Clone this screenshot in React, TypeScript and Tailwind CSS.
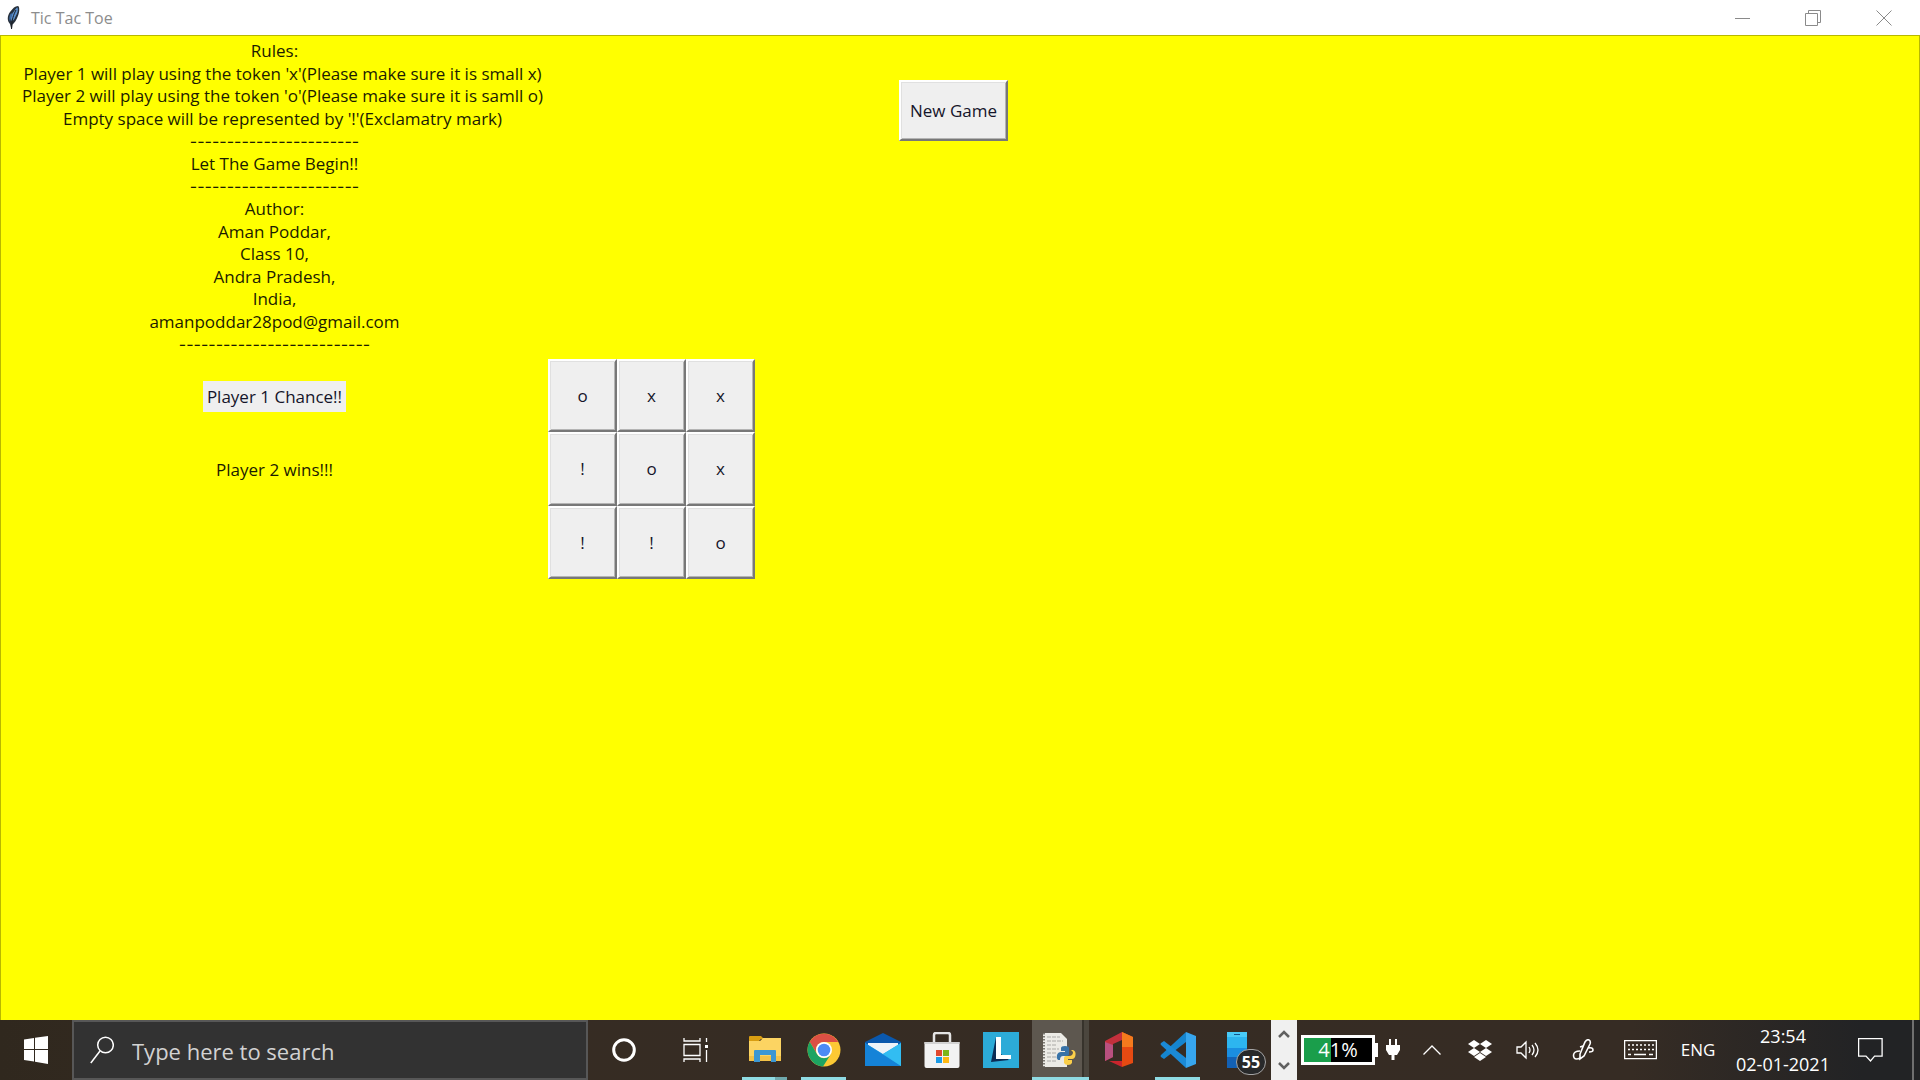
import React, { ReactNode } from "react";

const rules: { text: string; kind?: "wide" | "dashes" }[] = [
  { text: "Rules:" },
  { text: "Player 1 will play using the token 'x'(Please make sure it is small x)", kind: "wide" },
  { text: "Player 2 will play using the token 'o'(Please make sure it is samll o)", kind: "wide" },
  { text: "Empty space will be represented by '!'(Exclamatry mark)", kind: "wide" },
  { text: "-----------------------", kind: "dashes" },
  { text: "Let The Game Begin!!" },
  { text: "-----------------------", kind: "dashes" },
  { text: "Author:" },
  { text: "Aman Poddar," },
  { text: "Class 10," },
  { text: "Andra Pradesh," },
  { text: "India," },
  { text: "amanpoddar28pod@gmail.com" },
  { text: "--------------------------", kind: "dashes" },
];

const lineStyle = {
  plain: "text-[17px] leading-[22px]",
  wide: "pl-4 text-[17px] leading-[22px]",
  dashes: "font-['Inter',sans-serif] text-base leading-[22px]",
};

const board = ["o", "x", "x", "!", "o", "x", "!", "!", "o"];

const raised =
  "border-2 border-t-white border-l-white border-r-[#787878] border-b-[#787878] bg-[#efefef] text-center shadow-[inset_1px_1px_0_#e0e0e0,inset_-1px_-1px_0_#b4b4b4]";

function TitleBar() {
  return (
    <header className="flex h-[35px] shrink-0 items-center bg-white">
      <svg className="ml-1.5 h-6 w-4" viewBox="0 0 16 24">
        <path d="M12 0c2 1 1.500 7-.5 11-2 5-3.500 6-5 7.500L6 23l-1-1-1-4C1 15 1 10 4 6 7 2 9 0 12 0z" fill="#27303c" />
        <path d="M11.500 1.500c1 2 0 6-2 9-1 3-2.500 4-3.500 5-2-3-.5-7.500 1.500-9.500 2-3 3-4.500 4-4.500z" fill="#5d92cf" />
        <path d="M4.500 8c-1.500 3-1.500 5-.5 7.500L6.500 7z" fill="#3f6ea8" />
        <path d="M10 4C7.500 9 5.800 13 5.500 23" fill="none" stroke="#1a1d22" strokeWidth="1" />
      </svg>
      <h1 className="ml-[9px] grow text-base text-[#8d8d8d]">Tic Tac Toe</h1>
      <div className="flex">
        <button aria-label="Minimize" className="flex h-[34px] w-[70px] items-center justify-center">
          <svg className="size-4" viewBox="0 0 16 16"><path d="M0 8.500h15" stroke="#8a8a8a" fill="none" /></svg>
        </button>
        <button aria-label="Restore" className="flex h-[34px] w-[70px] items-center justify-center">
          <svg className="size-4" viewBox="0 0 16 16"><path d="M.5 3.500h12v12H.5zM3.500 3.500v-3h12v12h-3" stroke="#8a8a8a" fill="none" /></svg>
        </button>
        <button aria-label="Close" className="flex h-[34px] w-[72px] items-center justify-center">
          <svg className="size-4" viewBox="0 0 16 16"><path d="M.5.5l15 15M15.500.5l-15 15" stroke="#8a8a8a" fill="none" /></svg>
        </button>
      </div>
    </header>
  );
}

function Game() {
  return (
    <main className="flex grow items-start border-t border-r border-l border-[#b8b800] bg-[#ffff00] text-[17px] text-[#1c1c00]">
      <section className="flex w-[547px] shrink-0 flex-col items-center">
        <div className="mt-1 grid h-[316px] w-full grid-rows-[repeat(14,1fr)] text-center whitespace-nowrap">
          {rules.map((line, i) => (
            <p key={i} className={lineStyle[line.kind ?? "plain"]}>{line.text}</p>
          ))}
        </div>
        <div className="mt-1 flex h-[73px] items-center">
          <p className="bg-[#efefef] px-1 py-1 leading-[23px] text-[#15152a]">Player 1 Chance!!</p>
        </div>
        <div className="flex h-[73px] items-center">
          <p>Player 2 wins!!!</p>
        </div>
      </section>
      <section aria-label="Board" className="mt-[323px] grid h-[220px] shrink-0 grid-cols-[repeat(3,69px)] grid-rows-3 text-[#15152a]">
        {board.map((mark, i) => (
          <button key={i} className={raised}>{mark}</button>
        ))}
      </section>
      <button className={`${raised} mt-11 ml-36 h-[61px] shrink-0 px-[9px] text-[#15152a]`}>New Game</button>
    </main>
  );
}

type AppButtonProps = { label: string; bar?: boolean; stacked?: boolean; active?: boolean; children: ReactNode };

function AppButton({ label, bar, stacked, active, children }: AppButtonProps) {
  return (
    <button
      aria-label={label}
      className={`relative flex h-[60px] shrink-0 items-center justify-center ${active ? "ml-0.5 w-[57px] bg-[linear-gradient(90deg,#5d574f_50px,#37332c_50px,#37332c_52px,#4b463e_52px)] pr-1" : "w-[59px]"}`}
    >
      {children}
      {bar && (
        <span className={`absolute bottom-0 flex h-[3px] justify-end bg-[#8fdbe3] ${active ? "inset-x-0" : "inset-x-[7px]"}`}>
          {stacked && <span className="w-3 bg-[#6fa9ad]" />}
        </span>
      )}
    </button>
  );
}

function Apps() {
  return (
    <nav aria-label="Applications" className="flex">
      <AppButton label="File Explorer" bar stacked>
        <svg className="size-8" viewBox="0 0 32 32">
          <path d="M0 3q0-1 1-1h11l3 3h-3l-2 2H0z" fill="#d99e12" />
          <path d="M0 7h11l3-3h18v23H0z" fill="#fcd462" />
          <path d="M0 22h32v5H0z" fill="#f3c248" />
          <path d="M5 28V17q0-1 1-1h20q1 0 1 1v11h-5v-7H11v7z" fill="#3c97d3" />
        </svg>
      </AppButton>
      <AppButton label="Chrome" bar>
        <svg className="size-[34px]" viewBox="0 0 34 34">
          <circle cx="17" cy="17" r="16.500" fill="#fcc934" />
          <path d="M2.700 8.800A16.500 16.500 0 0 1 31.300 9H17a8 8 0 0 0-7.500 11z" fill="#dc5044" />
          <path d="M2.700 8.800A16.500 16.500 0 0 0 16 33.500L24 21a8 8 0 0 1-14 0z" fill="#1da462" />
          <circle cx="17" cy="17" r="8" fill="#fff" />
          <circle cx="17" cy="17" r="6.300" fill="#4c8bf5" />
        </svg>
      </AppButton>
      <AppButton label="Mail">
        <svg className="size-9" viewBox="0 0 36 36">
          <path d="M0 10L18 1l18 9v8H0z" fill="#0a58ad" />
          <path d="M3 11h30v10L18 30 3 21z" fill="#eef3f8" />
          <path d="M0 11l18 11L36 11v23H0z" fill="#29abea" />
          <path d="M0 11l36 23H0z" fill="#1583d8" />
          <path d="M18 22l18-11v23z" fill="#32bdf2" />
        </svg>
      </AppButton>
      <AppButton label="Microsoft Store">
        <svg className="size-9" viewBox="0 0 36 36">
          <path d="M10 12V3q0-2 2-2h12q2 0 2 2v9" fill="none" stroke="#e4e4e4" strokeWidth="2.500" />
          <path d="M.5 10h35v24q0 2-2 2h-31q-2 0-2-2z" fill="#f2f2f2" />
          <path d="M.5 10h35v2H.5z" fill="#d2d2d2" />
          <path d="M12 18h6v6h-6z" fill="#e0492f" /><path d="M19 18h6v6h-6z" fill="#7cb518" />
          <path d="M12 25h6v6h-6z" fill="#1c9be6" /><path d="M19 25h6v6h-6z" fill="#fdb813" />
        </svg>
      </AppButton>
      <AppButton label="L">
        <svg className="size-9" viewBox="0 0 36 36">
          <path d="M0 0h36v36H0z" fill="#2cabd8" />
          <path d="M13 5L8 30l18-2-8-6z" fill="#0b2c55" />
          <path d="M13 5h5v18h10v4H13z" fill="#fff" />
        </svg>
      </AppButton>
      <AppButton label="Python IDLE" bar active>
        <svg className="size-9" viewBox="0 0 36 36">
          <path d="M2 1h18l6 6v28H2z" fill="#ecebe6" />
          <path d="M6 5h13M6 9h16M6 13h10M6 17h12M6 21h9M6 25h11M6 29h9" stroke="#a9a9a5" strokeWidth="1.200" strokeDasharray="4 1" />
          <path d="M3 1v34" stroke="#55534c" strokeWidth="1.500" strokeDasharray="1.500 1.500" />
          <path d="M20 19v-3q0-2 4-2t4 2v6q0 2-2 2h-4q-3 0-3 4h-2q-2-2-1-5t4-3h4v-1z" fill="#3873a8" />
          <path d="M30 18h2q3 1 2.500 5t-3.500 4h-4v1h4v3q-1 2-4 2t-4-2v-5q0-2 2-2h3q4 0 4-4z" fill="#fbcf4a" />
        </svg>
      </AppButton>
      <AppButton label="Office">
        <svg className="h-9 w-7" viewBox="0 0 28 36">
          <path d="M0 9L17 0v8l-9 4v13l-8 4z" fill="#c4303c" />
          <path d="M0 10l8 3v12l-8 4z" fill="#b9507f" />
          <path d="M17 0l11 5v26l-11 4z" fill="#e64a12" />
          <path d="M17 0l11 5v10H17z" fill="#f47a1d" />
          <path d="M4 29h13v6z" fill="#c9252d" />
        </svg>
      </AppButton>
      <AppButton label="Visual Studio Code" bar>
        <svg className="size-9" viewBox="0 0 36 36">
          <path d="M26 0L1 23q-1 1 0 2l3 2 22-17z" fill="#1585cf" />
          <path d="M1 11l3-2 22 17v10L1 13q-1-1 0-2z" fill="#1b8ad6" />
          <path d="M26 0l10 4v28l-10 4z" fill="#37a6ee" />
        </svg>
      </AppButton>
      <AppButton label="Your Phone">
        <svg className="h-9 w-5" viewBox="0 0 20 36">
          <path d="M0 0h20v16H0z" fill="#48caf7" />
          <path d="M0 5h20v11H0z" fill="#2db5ef" />
          <path d="M0 16h20v9H0z" fill="#1a8ee0" />
          <path d="M0 25h20v11H0z" fill="#1361b4" />
          <path d="M7 2.500h6" stroke="#14558a" />
        </svg>
        <span className="absolute top-[29px] left-[29px] flex h-[26px] w-[30px] items-center justify-center rounded-full border border-[#a5a5a5] bg-[#28292a] text-base leading-4 font-bold text-white">55</span>
      </AppButton>
    </nav>
  );
}

function Tray() {
  const s = { fill: "none", stroke: "#fff", strokeWidth: 1.3 };
  return (
    <div className="flex shrink-0 items-center text-white">
      <div className="flex h-[60px] w-[26px] flex-col items-center justify-between bg-[#f0f0f0] py-2.5">
        <button aria-label="Scroll up" className="flex"><svg className="h-2 w-3" viewBox="0 0 12 8"><path d="M1 7l5-5 5 5" fill="none" stroke="#606060" strokeWidth="2.500" /></svg></button>
        <button aria-label="Scroll down" className="flex"><svg className="h-2 w-3" viewBox="0 0 12 8"><path d="M1 1l5 5 5-5" fill="none" stroke="#606060" strokeWidth="2.500" /></svg></button>
      </div>
      <div className="ml-1 flex items-center">
        <div className="flex h-[30px] w-[74px] items-center justify-center border-[3px] border-white bg-[linear-gradient(90deg,#1a9e4b_40%,#000_40%)] text-xl leading-6">41%</div>
        <div className="h-3.5 w-[3px] bg-white" />
      </div>
      <svg className="ml-2 h-[22px] w-3.5" viewBox="0 0 14 22"><path d="M3 0h2v6h4V0h2v6h3v5l-3 5H8.500v5h-3v-5H3l-3-5V6h3z" fill="#fff" /></svg>
      <button aria-label="Show hidden icons" className="ml-[23px]"><svg className="h-3 w-[18px]" viewBox="0 0 18 12"><path d="M.5 10.500L9 2l8.500 8.500" {...s} /></svg></button>
      <button aria-label="Dropbox" className="ml-[27px]">
        <svg className="h-[21px] w-6" viewBox="0 0 24 21"><path d="M6 0l6 4-6 4-6-4zM18 0l6 4-6 4-6-4zM6 8l6 4-6 4-6-4zM18 8l6 4-6 4-6-4zM12 13l6 4-6 4-6-4z" fill="#fff" /></svg>
      </button>
      <button aria-label="Volume" className="ml-6">
        <svg className="h-5 w-6" viewBox="0 0 24 20"><path d="M1 7h4l5-5v16l-5-5H1zM13 7q2 3 0 6M16 5q4 5 0 10M19 3q6 7 0 14" {...s} /></svg>
      </button>
      <button aria-label="Pen workspace" className="ml-8">
        <svg className="h-[22px] w-[22px]" viewBox="0 0 22 22"><path d="M8 15L13 3q2-3 4-2t1 4L12 17l-4 3zM11 7L8 8M8 12q-6 0-6.500 4 0 4 3 4 2 0 3.500-1M16 9q5-1 5 2 0 2-4 2" {...s} strokeWidth={1.6} /></svg>
      </button>
      <button aria-label="Touch keyboard" className="ml-[30px]">
        <svg className="h-5 w-[33px]" viewBox="0 0 33 20">
          <path d="M.6.600h31.800v18H.6z" {...s} />
          <path d="M4 5h26M4 9.500h26" {...s} strokeDasharray="2 2" /><path d="M4 14.500h3M10 14.500h12M25 14.500h4" {...s} />
        </svg>
      </button>
      <span className="w-[78px] pl-1 text-center text-[17px]">ENG</span>
      <div className="w-24 text-center text-lg leading-7 whitespace-nowrap"><p>23:54</p><p>02-01-2021</p></div>
      <button aria-label="Notifications" className="ml-[27px]">
        <svg className="h-6 w-[25px]" viewBox="0 0 25 24"><path d="M.6.600h23.500v17.500h-7.500L12.500 23 8 18.100H.6z" {...s} /></svg>
      </button>
      <button aria-label="Show desktop" className="ml-[29px] h-[60px] w-2 border-l-2 border-[#6f6f6f]" />
    </div>
  );
}

function Taskbar() {
  return (
    <footer className="flex h-[60px] shrink-0 items-center bg-[linear-gradient(90deg,#30281e_0%,#362c23_20%,#362c24_85%,#222325_97%)]">
      <button aria-label="Start" className="flex h-[60px] w-[72px] shrink-0 items-center justify-center">
        <svg className="h-7 w-6" viewBox="0 0 24 28"><path d="M0 3.500L10 2v11H0zM11 1.800L24 0v13H11zM0 14h10v11.500L0 24zM11 14h13v14l-13-2.300z" fill="#fff" /></svg>
      </button>
      <label className="flex h-[60px] w-[516px] shrink-0 items-center border-2 border-[#575757] bg-[#323232]">
        <svg className="ml-4 h-7 w-6" viewBox="0 0 24 28"><circle cx="15.500" cy="9" r="7.800" fill="none" stroke="#fff" strokeWidth="1.500" /><path d="M10 15L.8 27" stroke="#fff" strokeWidth="1.500" /></svg>
        <input type="text" aria-label="Search" placeholder="Type here to search" className="mt-0.5 ml-[18px] min-w-0 grow bg-transparent text-[22px] text-white outline-none placeholder:text-[#d2d2d2]" />
      </label>
      <button aria-label="Cortana" className="flex w-[72px] shrink-0 items-center justify-center">
        <svg className="size-6" viewBox="0 0 24 24"><circle cx="12" cy="12" r="10.300" fill="none" stroke="#fff" strokeWidth="3" /></svg>
      </button>
      <button aria-label="Task View" className="mr-1 flex w-[71px] shrink-0 items-center justify-center">
        <svg className="h-6 w-[26px]" viewBox="0 0 26 24"><path d="M1 0v3h16V0M1 24v-3h16v3M1 6.500h16v11H1zM23.500 0v4M23.500 12v12" fill="none" stroke="#fff" strokeWidth="1.300" /><path d="M22 7h3v3h-3z" fill="#fff" /></svg>
      </button>
      <Apps />
      <div className="grow" />
      <Tray />
    </footer>
  );
}

export default function App() {
  return (
    <div className="flex min-h-screen flex-col overflow-hidden font-['Open_Sans','Noto_Sans',sans-serif]">
      <TitleBar />
      <Game />
      <Taskbar />
    </div>
  );
}
